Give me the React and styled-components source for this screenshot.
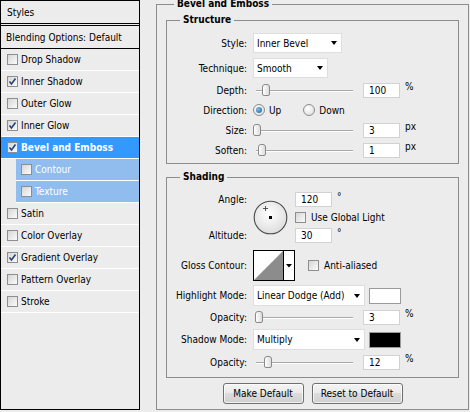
import React from 'react'
import styled, { createGlobalStyle } from 'styled-components'

const GlobalStyle = createGlobalStyle`
  html, body {
    margin: 0;
    padding: 0;
    background: #ececec;
  }
  body {
    font-family: "DejaVu Sans Condensed", "DejaVu Sans", sans-serif;
    font-stretch: semi-condensed;
    font-size: 10px;
    color: #000;
  }
  * { box-sizing: border-box; }
`

const Window = styled.div`
  display: flex;
  align-items: flex-start;
  width: 470px;
  height: 412px;
  overflow: hidden;
`

/* ---------- left list ---------- */

const Sidebar = styled.div`
  width: 140px;
  height: 410px;
  border: 1px solid #000;
  display: flex;
  flex-direction: column;
  flex: none;
`

const SidebarHeader = styled.div`
  height: 25px;
  border-bottom: 3px double #000;
  padding-left: 6px;
  display: flex;
  align-items: center;
`

const BlendRow = styled.div`
  height: 23px;
  border-bottom: 1px solid #000;
  padding-left: 5px;
  display: flex;
  align-items: center;
`

const LayerRow = styled.div`
  height: 22px;
  border-bottom: 1px solid #fff;
  margin-left: ${p => (p.$sub ? '15px' : '0')};
  padding-left: ${p => (p.$sub ? '5px' : '6px')};
  display: flex;
  align-items: center;
  gap: 3px;
  background: ${p => (p.$active ? '#3399ff' : p.$sub ? '#90bdee' : 'transparent')};
  color: ${p => (p.$active || p.$sub ? '#fff' : '#000')};
  font-weight: ${p => (p.$active ? 'bold' : 'normal')};
`

const Box = styled.span`
  width: 11px;
  height: 11px;
  border: 1px solid #8d8e8f;
  background: linear-gradient(135deg, #d6d6d6, #fbfbfb);
  display: inline-flex;
  align-items: center;
  justify-content: center;
  flex: none;
`

const Check = ({ on }) => (
  <Box>
    {on && (
      <svg width="9" height="9" viewBox="0 0 9 9">
        <path d="M1.5 4.5 L3.5 7 L7.5 1.5" fill="none" stroke="#23427a" strokeWidth="1.6" />
      </svg>
    )}
  </Box>
)

/* ---------- right panel ---------- */

const Main = styled.div`
  margin-left: 16px;
  margin-top: -1px;
`

const Group = styled.fieldset`
  margin: ${p => p.$margin || '0'};
  padding: ${p => p.$pad || '0'};
  width: ${p => p.$w}px;
  border: 1px solid #8c8c8c;
  min-width: 0;
`

const Legend = styled.legend`
  font-weight: bold;
  line-height: ${p => p.$lh || 12}px;
  padding: 0 3px;
  margin-left: ${p => p.$ml}px;
`

const Row = styled.div`
  display: grid;
  grid-template-columns: 80px auto;
  column-gap: 6px;
  align-items: center;
  height: ${p => p.$h}px;
  margin-top: ${p => p.$mt}px;
`

const Label = styled.span`
  text-align: right;
  white-space: nowrap;
`

const Controls = styled.div`
  display: flex;
  align-items: center;
`

const SelectBox = styled.div`
  width: ${p => p.$w}px;
  height: ${p => p.$h}px;
  background: #fff;
  border: 1px solid #dedede;
  padding: 0 4px 0 3px;
  display: flex;
  align-items: center;
  justify-content: space-between;
  white-space: nowrap;
`

const Arrow = styled.span`
  width: 0;
  height: 0;
  border-left: 3.5px solid transparent;
  border-right: 3.5px solid transparent;
  border-top: 4px solid #000;
`

const Select = ({ w, h = 20, children }) => (
  <SelectBox $w={w} $h={h}>
    <span>{children}</span>
    <Arrow />
  </SelectBox>
)

const SliderWrap = styled.div`
  position: relative;
  width: 104px;
  height: 16px;
  margin-right: 6px;
`

const Track = styled.div`
  position: absolute;
  left: 3px;
  right: 4px;
  top: 8px;
  height: 1px;
  background: #a8a8a8;
  border-bottom: 1px solid #fff;
  box-sizing: content-box;
`

const Thumb = styled.div`
  position: absolute;
  top: 2px;
  width: 8px;
  height: 12px;
  border: 1px solid #8a8a8a;
  border-radius: 3px 3px 2px 2px;
  background: linear-gradient(90deg, #ffffff, #dcdcdc);
`

const Slider = ({ value, max }) => (
  <SliderWrap>
    <Track />
    <Thumb style={{ left: `${Math.round(3 + (value / max) * 97) - 4}px` }} />
  </SliderWrap>
)

const Field = styled.div`
  width: 37px;
  height: 15px;
  background: #fff;
  border: 1px solid #d2d2d2;
  padding-left: 5px;
  display: flex;
  align-items: center;
`

const Unit = styled.span`
  margin-left: 5px;
  align-self: flex-start;
  margin-top: -1px;
`

const Radio = styled.span`
  width: 12px;
  height: 12px;
  border-radius: 50%;
  border: 1px solid #8c8c8c;
  background: radial-gradient(circle at 40% 35%, #ffffff, #d8d8d8);
  display: inline-flex;
  align-items: center;
  justify-content: center;
  flex: none;
  margin-right: 4px;
  margin-left: ${p => p.$ml || 0}px;
  &::after {
    content: '';
    display: ${p => (p.$on ? 'block' : 'none')};
    width: 6px;
    height: 6px;
    border-radius: 50%;
    background: radial-gradient(circle at 35% 35%, #7cc0ee, #1b5c95);
  }
`

const AngleBlock = styled.div`
  display: grid;
  grid-template-columns: 80px 35px auto;
  column-gap: 6px;
  height: 51px;
  margin-top: 9px;
`

const AngleLabels = styled.div`
  display: flex;
  flex-direction: column;
  justify-content: space-between;
  text-align: right;
  line-height: 15px;
`

const Dial = styled.svg`
  margin-top: 8px;
`

const AngleInputs = styled.div`
  display: flex;
  flex-direction: column;
  gap: 5px;
  margin-left: 1px;
`

const InlineCheck = styled.div`
  display: flex;
  align-items: center;
  gap: 5px;
  height: 11px;
  margin-left: ${p => p.$ml || 0}px;
`

const Swatch = styled.div`
  width: 32px;
  height: 16px;
  margin-left: 4px;
  background: ${p => p.$color};
  border: 1px solid #9a9a9a;
`

const ButtonRow = styled.div`
  display: flex;
  justify-content: center;
  gap: 8px;
  margin-top: 5px;
`

const Button = styled.div`
  width: ${p => p.$w}px;
  height: 21px;
  border: 1px solid #707070;
  border-radius: 3px;
  background: linear-gradient(#f4f4f4 0%, #ebebeb 45%, #dcdcdc 50%, #d0d0d0 100%);
  display: flex;
  align-items: center;
  justify-content: center;
  box-shadow: inset 0 0 0 1px rgba(255, 255, 255, 0.7);
`

const layers = [
  { name: 'Drop Shadow' },
  { name: 'Inner Shadow', on: true },
  { name: 'Outer Glow' },
  { name: 'Inner Glow', on: true },
  { name: 'Bevel and Emboss', on: true, active: true },
  { name: 'Contour', sub: true },
  { name: 'Texture', sub: true },
  { name: 'Satin' },
  { name: 'Color Overlay' },
  { name: 'Gradient Overlay', on: true },
  { name: 'Pattern Overlay' },
  { name: 'Stroke' },
]

export default function App() {
  return (
    <Window>
      <GlobalStyle />
      <Sidebar>
        <SidebarHeader>Styles</SidebarHeader>
        <BlendRow>Blending Options: Default</BlendRow>
        {layers.map(l => (
          <LayerRow key={l.name} $active={l.active} $sub={l.sub}>
            <Check on={l.on} />
            <span>{l.name}</span>
          </LayerRow>
        ))}
      </Sidebar>

      <Main>
        <Group $w={313} $pad="5px 9px 5px 9px">
          <Legend $ml={8} $lh={10}>Bevel and Emboss</Legend>

          <Group $w={293} $pad="0 0 5px 0">
            <Legend $ml={13}>Structure</Legend>
            <Row $h={20} $mt={7}>
              <Label>Style:</Label>
              <Controls><Select w={89}>Inner Bevel</Select></Controls>
            </Row>
            <Row $h={20} $mt={5}>
              <Label>Technique:</Label>
              <Controls><Select w={75}>Smooth</Select></Controls>
            </Row>
            <Row $h={16} $mt={4}>
              <Label>Depth:</Label>
              <Controls>
                <Slider value={100} max={1000} />
                <Field>100</Field>
                <Unit>%</Unit>
              </Controls>
            </Row>
            <Row $h={16} $mt={4}>
              <Label>Direction:</Label>
              <Controls>
                <Radio $on />
                <span>Up</span>
                <Radio $ml={22} />
                <span>Down</span>
              </Controls>
            </Row>
            <Row $h={16} $mt={4}>
              <Label>Size:</Label>
              <Controls>
                <Slider value={3} max={250} />
                <Field>3</Field>
                <Unit>px</Unit>
              </Controls>
            </Row>
            <Row $h={16} $mt={4}>
              <Label>Soften:</Label>
              <Controls>
                <Slider value={1} max={16} />
                <Field>1</Field>
                <Unit>px</Unit>
              </Controls>
            </Row>
          </Group>

          <Group $w={293} $pad="0 0 7px 0" $margin="7px 0 0 0">
            <Legend $ml={13}>Shading</Legend>
            <AngleBlock>
              <AngleLabels>
                <span>Angle:</span>
                <span>Altitude:</span>
              </AngleLabels>
              <Dial width="35" height="35" viewBox="0 0 35 35">
                <defs>
                  <radialGradient id="dialFill" cx="45%" cy="40%" r="60%">
                    <stop offset="0%" stopColor="#ffffff" />
                    <stop offset="100%" stopColor="#dedede" />
                  </radialGradient>
                </defs>
                <circle cx="17.5" cy="17.5" r="16.3" fill="url(#dialFill)" stroke="#4a4a4a" strokeWidth="1.1" />
                <rect x="16" y="16" width="3" height="3" fill="#000" />
                <path d="M12.5 6 V11 M10 8.5 H15" stroke="#333" strokeWidth="0.8" />
              </Dial>
              <AngleInputs>
                <Controls>
                  <Field>120</Field>
                  <Unit>°</Unit>
                </Controls>
                <InlineCheck>
                  <Check />
                  <span>Use Global Light</span>
                </InlineCheck>
                <Controls>
                  <Field>30</Field>
                  <Unit>°</Unit>
                </Controls>
              </AngleInputs>
            </AngleBlock>

            <Row $h={31} $mt={7}>
              <Label>Gloss Contour:</Label>
              <Controls>
                <svg width="42" height="31" viewBox="0 0 42 31">
                  <rect x="0.5" y="0.5" width="41" height="30" fill="#fff" stroke="#000" />
                  <path d="M1 30 L30 1 L30 30 Z" fill="#8c8c8c" />
                  <path d="M30.5 0.5 V30.5" stroke="#000" />
                  <path d="M33 14 H39 L36 17.5 Z" fill="#000" />
                </svg>
                <InlineCheck $ml={13}>
                  <Check />
                  <span>Anti-aliased</span>
                </InlineCheck>
              </Controls>
            </Row>

            <Row $h={21} $mt={4}>
              <Label>Highlight Mode:</Label>
              <Controls>
                <Select w={112} h={21}>Linear Dodge (Add)</Select>
                <Swatch $color="#fff" />
              </Controls>
            </Row>
            <Row $h={16} $mt={3}>
              <Label>Opacity:</Label>
              <Controls>
                <Slider value={3} max={100} />
                <Field>3</Field>
                <Unit>%</Unit>
              </Controls>
            </Row>
            <Row $h={21} $mt={4}>
              <Label>Shadow Mode:</Label>
              <Controls>
                <Select w={112} h={21}>Multiply</Select>
                <Swatch $color="#000" />
              </Controls>
            </Row>
            <Row $h={16} $mt={4}>
              <Label>Opacity:</Label>
              <Controls>
                <Slider value={12} max={100} />
                <Field>12</Field>
                <Unit>%</Unit>
              </Controls>
            </Row>
          </Group>

          <ButtonRow>
            <Button $w={81}>Make Default</Button>
            <Button $w={91}>Reset to Default</Button>
          </ButtonRow>
        </Group>
      </Main>
    </Window>
  )
}
